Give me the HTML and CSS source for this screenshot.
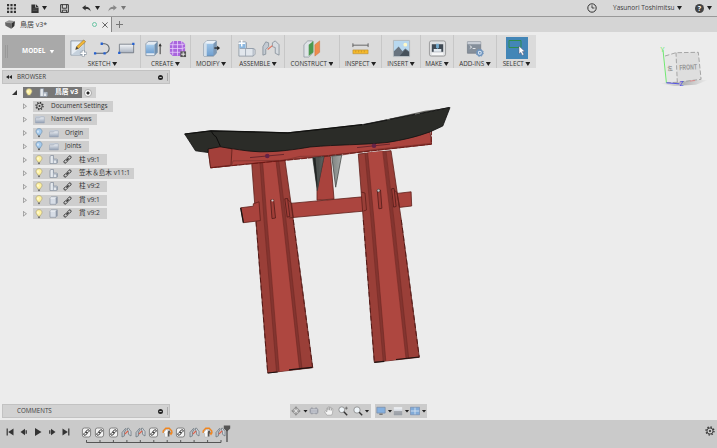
FILE: index.html
```html
<!DOCTYPE html>
<html lang="en">
<head>
<meta charset="utf-8">
<title>鳥居 v3*</title>
<link rel="stylesheet" href="styles.css">
</head>
<body>
<svg class="defs" aria-hidden="true">
  <defs>
    <linearGradient id="blue" x1="0" y1="0" x2="0" y2="1"><stop offset="0" stop-color="#a9cdec"/><stop offset="1" stop-color="#6f9fd0"/></linearGradient>
    <linearGradient id="grey" x1="0" y1="0" x2="0" y2="1"><stop offset="0" stop-color="#f4f6f9"/><stop offset="1" stop-color="#a9b2bf"/></linearGradient>
    <linearGradient id="dir" x1="0" y1="0" x2="0" y2="1"><stop offset="0" stop-color="#eef1f5"/><stop offset="1" stop-color="#929fb3"/></linearGradient>
    <linearGradient id="spike" x1="0" y1="0" x2="1" y2="0"><stop offset=".2" stop-color="#4c504e"/><stop offset="1" stop-color="#a4a8a6"/></linearGradient>
    <linearGradient id="shadow" x1="0" y1="0" x2="1" y2="0"><stop offset="0" stop-color="#bbb" stop-opacity="0"/><stop offset=".5" stop-color="#b4b4b4"/><stop offset="1" stop-color="#bbb" stop-opacity="0"/></linearGradient>
  </defs>
  <symbol id="gear" viewBox="0 0 12 12"><circle cx="6" cy="6" r="4.8" fill="none" stroke="#333" stroke-width="1.6" stroke-dasharray="1.7 2.07"/><circle cx="6" cy="6" r="3.7" fill="none" stroke="#333" stroke-width="1.1"/><circle cx="6" cy="6" r="1.3" fill="#333"/></symbol>
  <symbol id="bulb" viewBox="0 0 8 10"><path d="M4 .6C2 .6 1 2 1 3.5 1 5 2.6 5.8 2.8 7.2H5.2C5.4 5.8 7 5 7 3.500 7 2 6 .6 4 .6Z" fill="#fff3a0" stroke="#aaa07a" stroke-width=".7"/><path d="M3 7.400h2v1.200L4 9.600 3 8.600z" fill="#777"/><path d="M3 2.600v2" stroke="#fff"/></symbol>
  <symbol id="bulb-off" viewBox="0 0 8 10"><path d="M4 .6C2 .6 1 2 1 3.500 1 5 2.600 5.800 2.800 7.200H5.200C5.400 5.800 7 5 7 3.500 7 2 6 .6 4 .6Z" fill="#a5cbee" stroke="#6e8fae" stroke-width=".7"/><path d="M3 7.400h2v1.200L4 9.600 3 8.600z" fill="#666"/><path d="M3 2.600v2" stroke="#fff"/></symbol>
  <symbol id="folder" viewBox="0 0 10 9"><path d="M.5 1h8.800v7H.5z" fill="#c3cbd6"/><path d="M.5 3h4l1-1h3.800v6H.5z" fill="url(#dir)" stroke="#98a2b2" stroke-width=".5"/></symbol>
  <symbol id="assembly" viewBox="0 0 9 9"><path d="M1 1.300 2 .5h2.500v3.600h3l1 .5v3.200l-.8.8H1z" fill="#e4e8ed" stroke="#7e8897" stroke-width=".7"/><path d="M4.400 1v7.400M4.600 5h3.800M7.600 5v3.400" stroke="#98a2b0" stroke-width=".8"/></symbol>
  <symbol id="body" viewBox="0 0 9 9"><path d="M1 2 2.400.8H8.300v6L7 8.300H1z" fill="#d7dde6" stroke="#7e8897" stroke-width=".6"/><path d="M6.700 2.200v6L8.200 6.800v-6z" fill="#8e98a7"/><path d="M1.200 2h5.500" stroke="#fff" stroke-width=".7"/></symbol>
  <symbol id="link" viewBox="0 0 10 10"><g fill="none" stroke="#333" stroke-width="1"><rect x="4.500" y="1.700" width="4.800" height="2.800" rx="1.400" transform="rotate(-45 6.900 3.100)"/><rect x=".7" y="5.500" width="4.800" height="2.800" rx="1.400" transform="rotate(-45 3.100 6.900)"/><path d="M3.600 6.400 6.400 3.600"/></g></symbol>
  <symbol id="t-link" viewBox="0 0 11 11"><rect x="1.400" y="1" width="8.200" height="9" rx="2" fill="#f4f4f4" stroke="#777" stroke-width=".9"/><g fill="none" stroke="#222" stroke-width=".9"><rect x="5" y="3.100" width="3.400" height="2.200" rx="1.100" transform="rotate(-45 6.700 4.200)"/><rect x="2.600" y="5.700" width="3.400" height="2.200" rx="1.100" transform="rotate(-45 4.300 6.800)"/></g></symbol>
  <symbol id="t-joint" viewBox="0 0 11 11"><path d="M1 10V5.500L4.500 1.400l.6 1.400L3.500 5v3.800z" fill="#bcc3ca" stroke="#6f7880" stroke-width=".8"/><path d="M6 1.600 7.400 1 10 4.600V9L7.600 7.400V4.800z" fill="#d5dadf" stroke="#6f7880" stroke-width=".8"/><path d="M3.800 7.200 7 4" stroke="#e0604a" stroke-width="1.100"/></symbol>
  <symbol id="t-joint-o" viewBox="0 0 11 11"><path d="M1.200 6V4L3.800 1.200h3.400L9.800 4v2" fill="none" stroke="#ef8520" stroke-width="1.400"/><path d="M1.800 5.400 4.300 2.400l2 1.300-1 2V10H2.800V6.600z" fill="#fff" stroke="#999" stroke-width=".4"/><path d="m6 4.200 1.600-.6 1 2L7.400 7v2.500H6z" fill="#555"/><path d="M7.200 5.800h3.600L9 8.600z" fill="#ef8520"/></symbol>
  <symbol id="plate" viewBox="0 0 20 20"><path d="M2 5 5 2h10v13l-3 3H2z" fill="url(#blue)" stroke="#60788f" stroke-width=".7"/><path d="M2 5 5 2h10l-3 3z" fill="#eaf1f8"/><path d="M2 5h3v13H2z" fill="#d3dfea"/><path d="m12 5 3-3v13l-3 3z" fill="#7d98b4"/></symbol>
</svg>

<header class="appbar">
  <div class="appbar-left">
    <svg class="ic-grid" viewBox="0 0 10 10" fill="#333"><path d="M0 0h2.400v2.400H0zM3.800 0h2.400v2.400H3.800zM7.600 0H10v2.400H7.600zM0 3.800h2.400v2.400H0zM3.800 3.800h2.400v2.400H3.800zM7.600 3.800H10v2.400H7.600zM0 7.600h2.400V10H0zM3.800 7.600h2.400V10H3.800zM7.600 7.600H10V10H7.600z"/></svg>
    <svg class="ic-file" viewBox="0 0 8 10"><path d="M0 .5h4.200v3.400H8V10H0z" fill="#333"/><path d="M5 .3 8 3.200H5z" fill="#333"/><path d="M1.500 5.500h5M1.500 7.200h5" stroke="#777" stroke-width=".5"/></svg>
    <i class="caret c-file"></i>
    <svg class="ic-save" viewBox="0 0 10 10"><path d="M.7.7h8.600v8.600H.7zM2.600.7v4h4.800v-4M2.600 9.300V6.800h4.800v2.500" fill="none" stroke="#333" stroke-width="1.100"/></svg>
    <svg class="ic-undo" viewBox="0 0 10 8"><path d="M0 3.200 4 0v2c3.600 0 5.400 1.800 5.800 5.400C8.500 5.200 7 4.600 4 4.600v1.800z" fill="#333"/></svg>
    <i class="caret c-undo"></i>
    <svg class="ic-redo" viewBox="0 0 10 8"><path d="M10 3.200 6 0v2C2.400 2 .6 3.800.2 7.400 1.500 5.200 3 4.600 6 4.600v1.800z" fill="#888"/></svg>
    <i class="caret c-redo"></i>
  </div>
  <div class="appbar-right">
    <svg class="ic-clock" viewBox="0 0 10 10" fill="none" stroke="#333"><circle cx="5" cy="5" r="4.200" stroke-width="1"/><path d="M5 2.300V5h2.400" stroke-width=".9"/></svg>
    <span class="user">Yasunori Toshimitsu</span>
    <i class="caret c-user"></i>
    <span class="help">?</span>
    <i class="caret"></i>
  </div>
</header>

<nav class="tabs">
  <div class="tab">
    <svg class="ic-cube" viewBox="0 0 10 9"><path d="M0 2.200 4 .3l6 .9-3.600 2z" fill="#999"/><path d="m0 2.200 6.200 1v5.500L.5 5.800z" fill="#666"/><path d="m6.400 3.200 3.600-2-.6 4.800-3 2.700z" fill="#333"/></svg>
    <span class="tab-name">鳥居 v3*</span>
    <i class="ring"></i>
    <svg class="ic-x" viewBox="0 0 6 6"><path d="m.4.4 5.200 5.200M5.600.4.4 5.600" stroke="#555" stroke-width=".9"/></svg>
  </div>
  <svg class="ic-plus" viewBox="0 0 7 7"><path d="M3.500 0v7M0 3.500h7" stroke="#777"/></svg>
</nav>

<main class="stage">
  <svg class="model" viewBox="0 32 717 388">
    <g stroke="#601f1a" stroke-width=".8" stroke-linejoin="round">
      <path d="M290 203.400 365 196.600V211l-72 6.500z" fill="#ab453f"/>
      <path d="M324 156.500h6.500L334 199l-17 1.200V190z" fill="#a9433d"/>
      <path d="M251.700 163 285 160.500 293.300 220 312.700 367.700 267.700 373 256 221.700z" fill="#9a3f38"/>
      <path d="M260.500 162.800 276 161 283.200 220 300 369 279 371.500 266.500 220z" fill="#ae4740" stroke="none"/>
      <path d="m261.400 162.800 4.100 57.200 12.300 151.500M277.400 161.100 284.500 220l16.200 149" fill="none" stroke="#833530" stroke-width="2.600"/>
      <path d="M260 162.800 264 220 276.500 371.700M262.700 162.800 267 220 279.200 371.500M276 161.200 283 220 299.500 369.200M278.800 161 286 220 302 369" fill="none" stroke="#702924" stroke-width=".6"/>
      <path d="M358.300 154 391 150.700 401.300 220 419.300 357.300 374.300 362.300 363.300 220z" fill="#9a3f38"/>
      <path d="M367.500 152.500 383 151 391 220 406.500 358.500 385.500 361 374 220z" fill="#ae4740" stroke="none"/>
      <path d="m366.400 153 6.200 67 12 141M384.300 151.200 392.400 220l15 138.400" fill="none" stroke="#833530" stroke-width="2.600"/>
      <path d="M365 153 371 220 383.200 361.200M367.700 152.800 374 220 385.800 361M382.700 151.200 390.800 220 406 358.600M386 151 394 220 408.700 358.400" fill="none" stroke="#702924" stroke-width=".6"/>
      <path d="m240.700 207.800 12.600-1.600v-2.400l5.700-2 1.400 18.800-17 2.100z" fill="#a9433d"/>
      <path d="m240.700 207.800 2.700 14.900" stroke="#1c1412" stroke-width="1.300"/>
      <path d="m397.200 193.400 13.900-1.600.6 14.200-12.200 1.400z" fill="#a9433d"/>
      <path d="m361 192 4 1 1.500 17-3 1M287 199l4.500 4 1.800 14.500-4 .5M392 188.500l5 4 2.600 14.800" fill="none"/>
      <path d="m270.600 200 3-.3 1.900 18.300-3.500.6zM284.800 198.800l2.800-.3 2.200 18-2.600.6zM377.300 190.300l3.200-.3 1.400 18.300-3 .5zM391.600 188.800l2.500-.3 2 18-2.500.6z" fill="#a03d37" stroke="#521c19" stroke-width=".8"/>
      <path d="M208 148.500 222 143.500 430 131.500 431.500 144.200 310 157.500 210.600 167.800z" fill="#ac443e"/>
      <path d="m220 146 12 3-1 16.500-20.400 2.300L208 148.500z" fill="#a3403a"/>
      <path d="m211 167.500 21-2.600 1-4 50-.5 17-4 40-1 35-6 55-6" fill="none" stroke="#76302b" stroke-width=".6"/>
    </g>
    <path d="m210.600 167.800 99.400-9.900 121.500-13.700V131" fill="none" stroke="#6f1613" stroke-width=".9" stroke-dasharray="6 1"/>
    <path d="m267.700 373 10-1M289 369.800l23-2.500M374.300 362.300l10-1M396 359.500l23-2.500" stroke="#1e1110" stroke-width="1.200"/>
    <path d="m256 221.700 11.700 151M293.300 220l19.400 147.700M363.300 220l11 142M401.300 220l18 137.300" fill="none" stroke="#4a100e" stroke-width=".8" stroke-dasharray="5 3"/>
    <path d="m312.700 157.600 11.300-1-6.700 34zM331.700 156l10-.8-6 32z" fill="url(#spike)" stroke="#3a3e3c" stroke-width=".7"/>
    <path d="m313 158 2.500-.3 2 26-.5 6z" fill="#222524"/>
    <path d="M184.700 134 211 130.800 288 132.800 320 129.400 362 124.700 450 107.500 442.800 126 430 131.900C416 137 403 140 387 142.500 362 145 338 144.500 310 147 295 149.500 280 151.900 260 151.800 246 151.500 233 148.600 220 146.800L208 149V152.500L195.500 150.800Z" fill="#2b2c28" stroke="#111" stroke-width=".8"/>
    <path d="m211 131 3 4.400 2 1.200 4.400 9.800" fill="none" stroke="#0d0d0c"/>
    <path d="M368 123.600 425 110.700 449 107.700 422 113.200z" fill="#686864"/>
    <path d="m364 124.700 23-4.600M390 119.300l25-5M420 113.500l29-6" stroke="#111" stroke-width=".9"/>
    <path d="m184.700 134 26.300-3.200 77 2 32-3.400 42-4.700" fill="none" stroke="#11110f" stroke-width="1.200"/>
    <path d="m250 157.600 34-3.200M357 147.600l33-3.500" stroke="#5a2028" stroke-width=".8"/>
    <circle cx="267.300" cy="156" r="2.300" fill="#642347"/><circle cx="374" cy="145.800" r="2.300" fill="#642347"/>
    <circle cx="272.500" cy="200.500" r="1.100" fill="#ccc"/><circle cx="378.500" cy="190.600" r="1.400" fill="#ccc" stroke="#333" stroke-width=".5"/>

    <path d="m660 83.500 20-4 28 .5-12 4.800-22 1.200z" fill="url(#shadow)"/>
    <path d="m665 56 11-3.300 1.300 29.600-10.600.4z" fill="#e6e6e6"/>
    <path d="m676 52.700 22.300-.4 2.800 27-23.800 3z" fill="#dedede"/>
    <path d="m665 56 11-3.300 22.300-.4 2.800 27-23.800 3L676 52.700M677.300 82.300l-10.600.4" fill="none" stroke="#949494" stroke-width=".8" stroke-dasharray="4.500 2"/>
    <path d="m663 50 3.400 32.800" stroke="#63e763" stroke-width=".9"/><path d="m666.400 82.800 13 1" stroke="#4747e6" stroke-width=".9"/><path d="m690 81.100 5-.6" stroke="#e68080" stroke-width=".8"/>
    <text class="axis" x="660.600" y="51.800" fill="#58e858">Y</text>
    <text class="axis" x="679.400" y="86" fill="#4848ee">Z</text>
    <text class="face" x="679.500" y="70.200" textLength="17.500" lengthAdjust="spacingAndGlyphs" transform="rotate(-3 680 70)">FRONT</text>
    <text class="face side" x="668" y="71" textLength="5" lengthAdjust="spacingAndGlyphs" transform="rotate(-12 668 71)">左</text>
  </svg>

  <section class="ribbon">
    <div class="workspace"><i class="grip"></i><span>MODEL</span><i class="caret light"></i></div>
    <div class="group g-sketch">
      <div class="icons">
        <svg viewBox="0 0 20 20"><path d="M2 2h14v15H2z" fill="#e7edf4" stroke="#7d8b99" stroke-width=".8"/><path d="m2 17 14-11v11z" fill="#c5d1dd"/><path d="m7 11 1-3 7.500-7 2 2L10 10z" fill="#f2b738" stroke="#8a6a30" stroke-width=".6"/><path d="m7 11 1-3 2 2z" fill="#444"/><path d="M15 11.500v7M11.500 15h7" stroke="#8995a2" stroke-width="3"/><path d="M15 12v6M12 15h6" stroke="#fff" stroke-width="1.700"/></svg>
        <svg viewBox="0 0 20 20"><path d="M2 15h10a5 5 0 0 0 0-10H9" fill="none" stroke="#555f68" stroke-width="1.100"/><path d="M1 14h2.400v2.400H1zM11 14h2.400v2.400H11zM8 3.800h2.400v2.400H8z" fill="#2460d0"/></svg>
        <svg viewBox="0 0 20 20"><path d="M2.500 5.500h15v9h-15z" fill="url(#grey)" stroke="#666e78" stroke-width=".8"/><path d="M16 4h2.400v2.400H16zM1.200 13.500h2.400v2.400H1.200z" fill="#2460d0"/></svg>
      </div>
      <div class="label"><span>SKETCH</span><i class="caret"></i></div>
    </div>
    <div class="group g-create">
      <div class="icons">
        <svg viewBox="0 0 20 20"><path d="M2 5 4.500 2.500H14V14l-3 3.500H2z" fill="#e4ebf2" stroke="#6c7f92" stroke-width=".7"/><path d="M2 6h9v9H2z" fill="url(#blue)"/><path d="m11 6 3-3v11l-3 3z" fill="#7190ae"/><path d="M17 16V6" stroke="#333"/><path d="m15.300 7.500 1.700-3 1.700 3z" fill="#333"/></svg>
        <svg viewBox="0 0 20 20"><path d="M5 2h9l4 3v8l-3 5H5l-3-3V5z" fill="#a965dd"/><path d="M6 2 5 6v11M10 2v15.500M14 2l1 4v8M2 6h13l3-1M2 10h13l3-1M2 14h13l2-1" fill="none" stroke="#ead2fc" stroke-width=".8"/><path d="M13 13h6v6h-6z" fill="#555"/><path d="M16 13.800v4.400M13.800 16h4.400" stroke="#eee"/></svg>
      </div>
      <div class="label"><span>CREATE</span><i class="caret"></i></div>
    </div>
    <div class="group g-modify">
      <div class="icons"><svg viewBox="0 0 20 20"><use href="#plate" width="20" height="20"/><path d="M13 9.500h4" stroke="#222" stroke-width="1.300"/><path d="m16 7 3 2.500-3 2.500z" fill="#222"/></svg></div>
      <div class="label"><span>MODIFY</span><i class="caret"></i></div>
    </div>
    <div class="group g-assemble">
      <div class="icons">
        <svg viewBox="0 0 20 20"><path d="M2 3h7l1 1v6h7l2 1v5l-2 2H2z" fill="#e1e6ec" stroke="#7b8794" stroke-width=".7"/><path d="M2.500 3.500h6.500V10H2.500z" fill="#8bb7df"/><path d="M9 10v8M3 10h14v8" fill="none" stroke="#929dab" stroke-width=".8"/><path d="M5 1v7M1.500 4.500h7" stroke="#fff" stroke-width="1.500"/></svg>
        <svg viewBox="0 0 20 20"><path d="M2 17V8l3-5 3 1v4l-3 3v5z" fill="#c3cad2" stroke="#7f8994" stroke-width=".8"/><path d="m12 4 3-2 4 4v11l-4-2V9l-3-1z" fill="#d6dbe0" stroke="#7f8994" stroke-width=".8"/><path d="m7 11 5-4" stroke="#e2725c" stroke-width="1.200"/></svg>
      </div>
      <div class="label"><span>ASSEMBLE</span><i class="caret"></i></div>
    </div>
    <div class="group g-construct">
      <div class="icons"><svg viewBox="0 0 20 20"><path d="M1 6 5 2h5v13l-4 4H1z" fill="#dfe3e7" stroke="#858e97" stroke-width=".7"/><path d="m6 6 5-4v12l-5 4z" fill="#4c9a50"/><path d="m12.500 6 5-4v12l-5 4z" fill="#ef8c4e" stroke="#c66e36" stroke-width=".5"/></svg></div>
      <div class="label"><span>CONSTRUCT</span><i class="caret"></i></div>
    </div>
    <div class="group g-inspect">
      <div class="icons"><svg viewBox="0 0 20 20"><path d="M2 6.500h16M2 4.500v4M18 4.500v4" stroke="#555" stroke-width=".9"/><path d="M2 11.500h16v4H2z" fill="#f5b92d" stroke="#a97f24" stroke-width=".5"/><path d="M5 12v2M8 12v2M11 12v2M14 12v2" stroke="#b58a25" stroke-width=".6"/></svg></div>
      <div class="label"><span>INSPECT</span><i class="caret"></i></div>
    </div>
    <div class="group g-insert">
      <div class="icons"><svg viewBox="0 0 20 20"><path d="M1.500 1.500h17v17h-17z" fill="#b8d8ef" stroke="#b3b8bd"/><circle cx="14" cy="6" r="2" fill="#fff9c8"/><path d="m2 13 5-5 4 5 3-3 4 3v5H2z" fill="#69747f"/><path d="m8 18 6-7 4 3v4z" fill="#46515b"/></svg></div>
      <div class="label"><span>INSERT</span><i class="caret"></i></div>
    </div>
    <div class="group g-make">
      <div class="icons"><svg viewBox="0 0 20 20"><rect x="1.500" y="2" width="17" height="16" rx="2" fill="#dfe1e3" stroke="#888" stroke-width=".8"/><path d="M4 5.500h12v8H4z" fill="#404a54"/><path d="M6 10.500h8v3H6z" fill="#e3eaf0"/><path d="M8.500 5h3v4L10 10.500 8.500 9z" fill="#74a9cc"/><path d="M4 15.800h12" stroke="#fff" stroke-width="1.500"/></svg></div>
      <div class="label"><span>MAKE</span><i class="caret"></i></div>
    </div>
    <div class="group g-addins">
      <div class="icons"><svg viewBox="0 0 20 20"><path d="M1.500 3h14v12h-14z" fill="#858f9b" stroke="#6e7782" stroke-width=".7"/><path d="M1.500 3h14v2.500h-14z" fill="#c9ced6"/><path d="m4 7 2 1.500L4 10M7 10h3" fill="none" stroke="#fff" stroke-width=".8"/><circle cx="14.500" cy="14.500" r="2.800" fill="#dce8f5" stroke="#6f94bd" stroke-width="1.500"/><circle cx="14.500" cy="14.500" r="3.800" fill="none" stroke="#6f94bd" stroke-dasharray="1.500 1.500"/><circle cx="14.500" cy="14.500" r="1" fill="#6f94bd"/></svg></div>
      <div class="label"><span>ADD-INS</span><i class="caret"></i></div>
    </div>
    <div class="group g-select">
      <div class="icons"><svg class="selected" viewBox="0 0 22 22"><path d="M3 3.500h12v7H3z" fill="none" stroke="#2f8d50" stroke-width="1"/><path d="m13 9 0 8 1.800-1.600 1.500 3 1.600-.8-1.500-3h2.500z" fill="#fff" stroke="#557" stroke-width=".5"/></svg></div>
      <div class="label"><span>SELECT</span><i class="caret"></i></div>
    </div>
  </section>

  <aside class="browser">
    <div class="panel-head"><svg class="ic-back" viewBox="0 0 6 4"><path d="M3 0v4L0 2zM6 0v4L3 2z" fill="#222"/></svg><span>BROWSER</span><i class="minus"></i><i class="edge"></i></div>
    <ul class="tree">
      <li class="root"><svg class="open" viewBox="0 0 5 5"><path d="M5 0v5H0z" fill="#333"/></svg><div class="chip dark"><svg class="bulb"><use href="#bulb"/></svg><svg class="kind"><use href="#assembly"/></svg><b>鳥居 v3</b></div><div class="eye"><i></i></div></li>
      <li><i class="closed"></i><div class="chip w-doc"><svg class="cog"><use href="#gear"/></svg><span class="wide">Document Settings</span></div></li>
      <li><i class="closed"></i><div class="chip w-named"><svg class="folder"><use href="#folder"/></svg><span class="wide">Named Views</span></div></li>
      <li><i class="closed"></i><div class="chip w-origin"><svg class="bulb"><use href="#bulb-off"/></svg><svg class="folder second"><use href="#folder"/></svg><span>Origin</span></div></li>
      <li><i class="closed"></i><div class="chip w-origin"><svg class="bulb"><use href="#bulb-off"/></svg><svg class="folder second"><use href="#folder"/></svg><span>Joints</span></div></li>
      <li><i class="closed"></i><div class="chip w-part"><svg class="bulb"><use href="#bulb"/></svg><svg class="kind"><use href="#assembly"/></svg><svg class="link"><use href="#link"/></svg><span>柱 v9:1</span></div></li>
      <li><i class="closed"></i><div class="chip w-long"><svg class="bulb"><use href="#bulb"/></svg><svg class="kind"><use href="#assembly"/></svg><svg class="link"><use href="#link"/></svg><span>笠木＆島木 v11:1</span></div></li>
      <li><i class="closed"></i><div class="chip w-part"><svg class="bulb"><use href="#bulb"/></svg><svg class="kind"><use href="#assembly"/></svg><svg class="link"><use href="#link"/></svg><span>柱 v9:2</span></div></li>
      <li><i class="closed"></i><div class="chip w-part"><svg class="bulb"><use href="#bulb"/></svg><svg class="kind"><use href="#body"/></svg><svg class="link"><use href="#link"/></svg><span>貫 v9:1</span></div></li>
      <li><i class="closed"></i><div class="chip w-part"><svg class="bulb"><use href="#bulb"/></svg><svg class="kind"><use href="#body"/></svg><svg class="link"><use href="#link"/></svg><span>貫 v9:2</span></div></li>
    </ul>
  </aside>

  <div class="bottom">
    <div class="panel-head comments"><span>COMMENTS</span><i class="minus"></i><i class="edge"></i></div>
    <div class="navbar nav-a">
      <svg viewBox="0 0 12 12"><path d="M6 1v10M1 6h10" stroke="#888" stroke-width="1.500"/><path d="m6 1 5 5-5 5-5-5z" fill="none" stroke="#888"/><circle cx="6" cy="6" r="1.700" fill="#ddd"/></svg>
      <i class="caret"></i>
      <svg viewBox="0 0 12 12"><path d="M1.500 3.500h9v5h-9z" fill="#dcdfe6" stroke="#8b8f9b"/><path d="M1 6h10M3.500 1.500v2M8.500 1.500v2M3.500 8v2M8.500 8v2" stroke="#898d98"/></svg>
      <svg viewBox="0 0 12 12"><path d="m3.500 11-2.700-4.200 1-.9L3.500 7V2.500h1.200V5l.5-4h1.400v4l.8-3.500 1.200.2v3.700L9.500 3l1.200.5-.5 5.200L9 11z" fill="#f4f4f4" stroke="#888" stroke-width=".6"/></svg>
      <svg viewBox="0 0 12 12"><circle cx="4.500" cy="4.500" r="3.500" fill="#eef4f8" stroke="#888"/><path d="m7 7 4 4" stroke="#333" stroke-width="1.700"/><path d="M10 .8v3.600M8.200 2.600h3.600" stroke="#555" stroke-width=".8"/></svg>
      <svg viewBox="0 0 12 12"><circle cx="4.800" cy="4.800" r="3.800" fill="#eef4f8" stroke="#888"/><path d="m7.400 7.400 3.600 3.600" stroke="#333" stroke-width="1.700"/></svg>
      <i class="caret"></i>
    </div>
    <div class="navbar nav-b">
      <svg viewBox="0 0 12 12"><path d="M1 1.500h10v7H1z" fill="#85b0df" stroke="#7488a4" stroke-width=".8"/><path d="M4 9h4v1.800H4z" fill="#777"/></svg><i class="caret"></i>
      <svg viewBox="0 0 12 12"><path d="M1 1.500h10v9.500H1z" fill="url(#grey)"/><path d="M1 6h10v5H1z" fill="#8a8e93" opacity=".6"/></svg><i class="caret"></i>
      <svg viewBox="0 0 12 12"><path d="M.5 1.500h11v9H.5z" fill="#81abd9" stroke="#738baf" stroke-width=".8"/><path d="M6 2v8M1 6h10" stroke="#dce7f3"/></svg><i class="caret"></i>
    </div>
  </div>
</main>

<footer class="timeline">
  <div class="play">
    <svg viewBox="0 0 8 8"><path d="M1.200.5v7" stroke="#333" stroke-width="1.200"/><path d="M7.500.5v7L2.200 4z" fill="#333"/></svg>
    <svg viewBox="0 0 8 8"><path d="M5 .8v6.400L.5 4z" fill="#333"/><path d="M6.200 2.200v3.600" stroke="#333" stroke-width="1.300"/></svg>
    <svg viewBox="0 0 8 8"><path d="M1 0v8l6.500-4z" fill="#333"/></svg>
    <svg viewBox="0 0 8 8"><path d="M3 .8v6.400L7.500 4z" fill="#333"/><path d="M1.800 2.200v3.600" stroke="#333" stroke-width="1.300"/></svg>
    <svg viewBox="0 0 8 8"><path d="M6.800.5v7" stroke="#333" stroke-width="1.200"/><path d="M.5.500v7L5.800 4z" fill="#333"/></svg>
  </div>
  <div class="track">
    <div class="steps">
      <svg><use href="#t-link"/></svg><svg><use href="#t-link"/></svg><svg><use href="#t-link"/></svg><svg><use href="#t-joint"/></svg><svg><use href="#t-joint"/></svg><svg><use href="#t-link"/></svg><svg><use href="#t-joint-o"/></svg><svg><use href="#t-link"/></svg><svg><use href="#t-joint"/></svg><svg><use href="#t-joint-o"/></svg><svg><use href="#t-joint"/></svg>
    </div>
    <svg class="ruler" viewBox="0 0 136 4"><path d="M.5 0v2.500h134.500V0M14 0v2.500M27.400 0v2.500M40.900 0v2.500M54.300 0v2.500M67.800 0v2.500M81.200 0v2.500M94.700 0v2.500M108.100 0v2.500M121.600 0v2.500" fill="none" stroke="#555"/></svg>
  </div>
  <svg class="marker" viewBox="0 0 8 18"><path d="M.8.500h6.400v3L4 6.500.8 3.500z" fill="#555"/><path d="M4 5v12" stroke="#444" stroke-width="1.200"/></svg>
  <svg class="settings"><use href="#gear"/></svg>
</footer>
</body>
</html>
```
FILE: styles.css
```css
* { box-sizing: border-box; }
body {
  margin: 0;
  width: 717px;
  height: 448px;
  overflow: hidden;
  display: flex;
  flex-direction: column;
  background: #ececec;
  color: #3c3c3c;
  font: 7px/1 "Open Sans", "Noto Sans CJK JP", sans-serif;
  white-space: nowrap;
}
svg { display: block; flex: none; }
.defs { position: absolute; width: 0; height: 0; }
.caret {
  flex: none;
  width: 5px;
  height: 4px;
  background: #222;
  clip-path: polygon(0 0, 100% 0, 50% 100%);
}

.appbar {
  height: 17px;
  flex: none;
  display: flex;
  justify-content: space-between;
  background: #d8d8d8;
  border-bottom: 1px solid #999;
}
.appbar-left, .appbar-right { display: flex; align-items: center; }
.appbar-left { padding-left: 7px; }
.ic-grid { width: 9px; height: 9px; }
.ic-file { width: 8px; height: 9px; margin-left: 15px; }
.c-file { margin-left: 3px; }
.ic-save { width: 9px; height: 9px; margin-left: 13px; }
.ic-undo { width: 9px; height: 7px; margin-left: 13px; }
.c-undo { margin-left: 4px; }
.ic-redo { width: 9px; height: 7px; margin-left: 8px; }
.c-redo { margin-left: 4px; background: #777; }
.appbar-right { padding-right: 5px; }
.ic-clock { width: 10px; height: 10px; margin-right: 16px; }
.user { width: 62px; font-size: 6.5px; }
.c-user { margin: 0 13px 0 2px; }
.help {
  width: 9px;
  height: 9px;
  margin-right: 3px;
  border-radius: 50%;
  background: #444;
  color: #fff;
  text-align: center;
  font-size: 7px;
  font-weight: 700;
  line-height: 9px;
}

.tabs {
  height: 15px;
  flex: none;
  display: flex;
  align-items: center;
  background: #d5d5d5;
}
.tab {
  width: 112px;
  height: 15px;
  display: flex;
  align-items: center;
  background: #ececec;
  border-right: 1px solid #888;
}
.ic-cube { width: 10px; height: 9px; margin-left: 5px; }
.tab-name { width: 71px; padding-left: 5px; font-size: 7px; }
.ring { width: 5px; height: 5px; border: 1px solid #6bc4a4; border-radius: 50%; margin-left: 6px; }
.ic-x { width: 6px; height: 6px; margin-left: 5px; }
.ic-plus { width: 7px; height: 7px; margin-left: 4px; }

.stage {
  position: relative;
  height: 388px;
  flex: none;
  display: flex;
  flex-direction: column;
  align-items: flex-start;
  padding: 3px 0 2px 2px;
}
.model { position: absolute; left: 0; top: 0; width: 717px; height: 388px; }
.axis { font: 7px "Open Sans", sans-serif; }
.face { font: 700 7.5px "Liberation Sans", sans-serif; fill: #949494; }
.side { font-family: "Noto Sans CJK JP", sans-serif; font-size: 6px; }
.ribbon, .browser, .bottom { position: relative; }

.ribbon { display: flex; height: 33px; background: #dbdbdb; }
.workspace {
  width: 63px;
  display: flex;
  align-items: center;
  background: #a9a9a9;
  color: #fff;
  font-size: 6.5px;
  font-weight: 700;
}
.grip { width: 3px; height: 13px; margin: 0 14px 0 3px; border: 1px solid #999; border-width: 0 1px; }
.light { margin-left: 4px; background: #fff; }
.group { border-right: 1px solid #c7c7c7; }
.g-select { border: 0; }
.g-sketch { width: 76px; }
.g-create { width: 50px; }
.g-modify { width: 41px; }
.g-assemble { width: 53px; }
.g-construct { width: 55px; }
.g-inspect { width: 42px; }
.g-insert { width: 39px; }
.g-make { width: 33px; }
.g-addins { width: 43px; }
.g-select { width: 39px; }
.icons { display: flex; justify-content: center; align-items: center; gap: 5px; height: 24px; padding-top: 2px; }
.icons svg { width: 19px; height: 19px; }
.g-sketch .icons { gap: 5px; }
.icons .selected { width: 22px; height: 22px; background: #4386b7; }
.label { display: flex; justify-content: center; align-items: center; gap: 1.5px; height: 9px; padding-top: 1px; font-size: 6.3px; color: #333; }

.browser { margin-top: 2px; }
.panel-head {
  width: 168px;
  height: 14px;
  display: flex;
  align-items: center;
  padding-left: 3px;
  background: #d2d2d2;
  border: 1px solid #c2c2c2;
  font-size: 6.2px;
}
.ic-back { width: 6px; height: 4px; margin-right: 5px; }
.panel-head span { flex: 1; }
.minus { width: 5px; height: 5px; border-radius: 50%; border: 2px solid #222; border-width: 2px 1px; background: #ccc; }
.edge { width: 1px; height: 8px; margin: 0 1px 0 4px; background: #aaa; }
.tree { list-style: none; margin: 2px 0 0; padding: 0; }
.tree li { display: flex; align-items: center; height: 13.45px; padding-left: 21px; }
.tree .root { padding-left: 10px; }
.open { width: 5px; height: 5px; margin-right: 6px; }
.closed {
  width: 4px;
  height: 6px;
  margin-right: 6px;
  background: #999;
  clip-path: polygon(0 0, 100% 50%, 0 100%, 0 0, 20% 25%, 20% 75%, 70% 50%, 20% 25%);
}
.chip { display: flex; align-items: center; height: 11px; padding-left: 2px; background: #cecece; }
.chip span { padding-left: 6px; font-size: 6.4px; color: #333; }
.chip .wide { padding-left: 6px; }
.chip .cog + .wide { padding-left: 7px; }
.dark { width: 59px; background: #777; color: #fff; }
.dark b { padding-left: 7px; font-size: 6.8px; }
.eye { width: 14px; height: 11px; background: #d0d0d0; display: flex; align-items: center; padding-left: 2px; }
.eye i { width: 8px; height: 8px; border: 1px solid #aaa; border-radius: 50%; background: radial-gradient(#222 0 1.3px, #fff 1.8px); }
.w-doc { width: 80px; }
.w-named { width: 64px; }
.w-origin { width: 56px; }
.w-part { width: 74px; }
.w-long { width: 101px; }
.bulb { width: 8px; height: 10px; }
.kind { width: 9px; height: 9px; margin-left: 6px; }
.cog { width: 9px; height: 10px; }
.folder { width: 10px; height: 9px; }
.second { margin-left: 6px; }
.link { width: 9px; height: 9px; margin-left: 5px; }
.chip .link + span { padding-left: 7px; font-size: 6.6px; }

.bottom { display: flex; margin-top: auto; }
.comments { padding-left: 14px; margin-right: 120px; }
.navbar { display: flex; align-items: center; height: 14px; background: #cbcbcb; }
.nav-a { width: 81px; margin-right: 4px; padding-left: 1px; }
.nav-b { width: 52px; padding-left: 1px; }
.navbar svg { width: 10px; height: 10px; margin-right: 4.5px; }
.navbar svg:has(+ .caret) { margin-right: 2px; }
.navbar .caret { width: 5px; height: 3px; }
.nav-a .caret { margin-right: 1px; }
.nav-b svg:has(+ .caret) { margin-right: 1.500px; }
.nav-b .caret { margin-right: .5px; }

.timeline { height: 28px; flex: none; display: flex; align-items: flex-start; background: #cacaca; }
.play { display: flex; gap: 6px; padding: 8px 0 0 6px; width: 81px; }
.play svg { width: 8px; height: 8px; }
.track { width: 142px; padding-top: 7px; }
.steps { display: flex; gap: 2.45px; }
.steps svg { width: 11px; height: 11px; }
.ruler { width: 136px; height: 4px; margin: 2px 0 0 5px; }
.marker { width: 8px; height: 18px; margin-top: 5px; }
.settings { width: 10px; height: 10px; margin: 6px 2px 0 auto; }
```
